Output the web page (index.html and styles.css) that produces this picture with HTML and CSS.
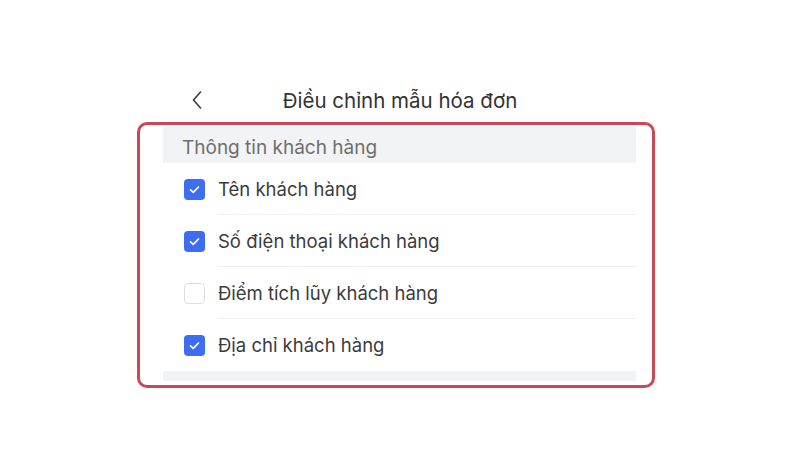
FILE: index.html
```html
<!DOCTYPE html>
<html lang="vi">
<head>
    <meta charset="UTF-8">
    <meta name="viewport" content="width=device-width, initial-scale=1.0">
    <title>Điều chỉnh mẫu hóa đơn</title>
    <link rel="stylesheet" href="styles.css">
</head>
<body>
    <div class="nav">
        <div class="back">
            <svg width="10" height="18" viewBox="0 0 10 18">
                <path d="M8.5 1 L1.5 9 L8.5 17" fill="none" stroke="#3a3a3a" stroke-width="1.6" stroke-linecap="round" stroke-linejoin="round"/>
            </svg>
        </div>
        <h1>Điều chỉnh mẫu hóa đơn</h1>
        <div></div>
    </div>

    <div class="panel">
        <div class="section-title">Thông tin khách hàng</div>

        <div class="row">
            <span class="check on"></span>
            <div class="label">Tên khách hàng</div>
        </div>
        <div class="row">
            <span class="check on"></span>
            <div class="label">Số điện thoại khách hàng</div>
        </div>
        <div class="row">
            <span class="check"></span>
            <div class="label">Điểm tích lũy khách hàng</div>
        </div>
        <div class="row last">
            <span class="check on"></span>
            <div class="label">Địa chỉ khách hàng</div>
        </div>

        <div class="footer-band"></div>
    </div>
</body>
</html>
```

FILE: styles.css
```css
body {
    margin: 0;
    background: #fff;
    font-family: Inter, "Noto Sans", sans-serif;
    color: #3b3b3b;
}

.nav {
    display: grid;
    grid-template-columns: 1fr auto 1fr;
    align-items: center;
    height: 40px;
    margin-top: 80px;
}

.back {
    display: flex;
    align-items: center;
    padding-left: 192px;
}

h1 {
    margin: 0;
    font-size: 20.5px;
    font-weight: 400;
    color: #333;
}

.panel {
    box-sizing: border-box;
    width: 518px;
    margin: 2px 0 0 137px;
    border: 3px solid #c94a55;
    border-radius: 10px;
    padding: 2px 16px 4px 23px;
}

.section-title {
    height: 36px;
    line-height: 41px;
    padding-left: 19px;
    background: #f2f3f5;
    font-size: 19px;
    color: #6e6e6e;
}

.row {
    display: flex;
    align-items: center;
    height: 52px;
    padding-left: 21px;
}

.label {
    flex: 1;
    align-self: stretch;
    display: flex;
    align-items: center;
    margin-left: 13px;
    border-bottom: 1px solid #efefef;
    font-size: 18.5px;
}

.row.last .label {
    border-bottom: none;
}

.check {
    width: 21px;
    height: 21px;
    box-sizing: border-box;
    border-radius: 4px;
    border: 1px solid #dedede;
    background: #fff;
}

.check.on {
    border: none;
    background: #3d6df2 url("data:image/svg+xml,%3Csvg xmlns='http://www.w3.org/2000/svg' width='21' height='21'%3E%3Cpath d='M6.5 10.8 L9.3 13.4 L14.5 8' fill='none' stroke='white' stroke-width='1.7' stroke-linecap='round' stroke-linejoin='round'/%3E%3C/svg%3E") no-repeat center;
}

.footer-band {
    height: 10px;
    background: #f2f3f5;
}
```
